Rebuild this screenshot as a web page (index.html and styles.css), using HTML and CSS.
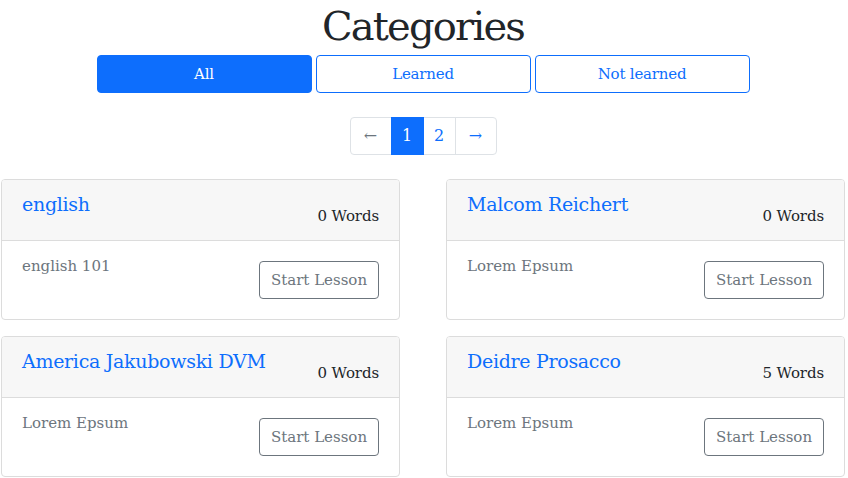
FILE: index.html
```html
<!DOCTYPE html>
<html lang="en">
<head>
<meta charset="utf-8">
<title>Categories</title>
<link rel="stylesheet" href="styles.css">
</head>
<body>
<main class="page">
  <h1 class="title">Categories</h1>
  <div class="filters">
    <button class="filter filter-active">All</button>
    <button class="filter">Learned</button>
    <button class="filter">Not learned</button>
  </div>
  <nav class="pager">
    <a class="page-item page-arrow">&larr;</a>
    <a class="page-item page-current">1</a>
    <a class="page-item">2</a>
    <a class="page-item page-arrow page-next">&rarr;</a>
  </nav>
  <section class="grid">
    <article class="card">
      <header class="card-head">
        <h5 class="card-title">english</h5>
        <span class="card-count">0 Words</span>
      </header>
      <div class="card-body">
        <p class="card-text">english 101</p>
        <button class="lesson-btn">Start Lesson</button>
      </div>
    </article>
    <article class="card">
      <header class="card-head">
        <h5 class="card-title">Malcom Reichert</h5>
        <span class="card-count">0 Words</span>
      </header>
      <div class="card-body">
        <p class="card-text">Lorem Epsum</p>
        <button class="lesson-btn">Start Lesson</button>
      </div>
    </article>
    <article class="card">
      <header class="card-head">
        <h5 class="card-title">America Jakubowski DVM</h5>
        <span class="card-count">0 Words</span>
      </header>
      <div class="card-body">
        <p class="card-text">Lorem Epsum</p>
        <button class="lesson-btn">Start Lesson</button>
      </div>
    </article>
    <article class="card">
      <header class="card-head">
        <h5 class="card-title">Deidre Prosacco</h5>
        <span class="card-count">5 Words</span>
      </header>
      <div class="card-body">
        <p class="card-text">Lorem Epsum</p>
        <button class="lesson-btn">Start Lesson</button>
      </div>
    </article>
  </section>
</main>
</body>
</html>
```
FILE: styles.css
```css
* { box-sizing: border-box; }
html, body { margin: 0; padding: 0; background: #fff; }
body {
  font-family: "DejaVu Serif", "Liberation Serif", serif;
  font-size: 16px;
  line-height: 24px;
  color: #212529;
}
.page { padding: 0 3px 0 1px; }
.title {
  margin: 0;
  padding-top: 2px;
  font-size: 40px;
  line-height: 48px;
  font-weight: 400;
  text-align: center;
  letter-spacing: -1.8px;
  color: #212529;
}
.filters {
  display: flex;
  justify-content: center;
  gap: 4px;
  margin-top: 5px;
}
.filter {
  width: 215px;
  height: 38px;
  border: 1px solid #0d6efd;
  border-radius: 4px;
  background: #fff;
  color: #0d6efd;
  font-family: inherit;
  font-size: 15px;
  letter-spacing: -0.2px;
  padding: 0;
}
.filter-active { background: #0d6efd; color: #fff; }
.pager {
  display: flex;
  justify-content: center;
  margin-top: 24px;
}
.page-item {
  display: flex;
  align-items: center;
  justify-content: center;
  width: 33px;
  height: 38px;
  border: 1px solid #dee2e6;
  margin-left: -1px;
  color: #0d6efd;
  font-size: 16px;
}
.page-arrow { width: 42px; color: #6c757d; border-radius: 4px 0 0 4px; margin-left: 0; }
.page-next { color: #0d6efd; border-radius: 0 4px 4px 0; margin-left: -1px; }
.page-current { background: #0d6efd; border-color: #0d6efd; color: #fff; position: relative; }
.grid {
  display: grid;
  grid-template-columns: 399px 399px;
  column-gap: 46px;
  row-gap: 16px;
  margin-top: 24px;
}
.card {
  border: 1px solid #dcdcdc;
  border-radius: 4px;
  overflow: hidden;
}
.card-head {
  display: flex;
  justify-content: space-between;
  align-items: flex-end;
  padding: 12px 20px 12px;
  background: #f7f7f7;
  border-bottom: 1px solid #dcdcdc;
}
.card-title {
  margin: 0 0 12px;
  font-size: 19px;
  line-height: 24px;
  font-weight: 400;
  color: #0d6efd;
  letter-spacing: -0.3px;
}
.card-count { font-size: 15px; letter-spacing: -0.1px; }
.card-body {
  display: flex;
  justify-content: space-between;
  align-items: flex-start;
  padding: 13px 20px 20px;
}
.card-text {
  margin: 0;
  color: #6c757d;
  font-size: 15px;
  letter-spacing: 0;
}
.lesson-btn {
  margin-top: 7px;
  width: 120px;
  height: 38px;
  border: 1px solid #6c757d;
  border-radius: 4px;
  background: #fff;
  color: #6c757d;
  font-family: inherit;
  font-size: 15px;
  letter-spacing: 0;
  padding: 0;
}
```
